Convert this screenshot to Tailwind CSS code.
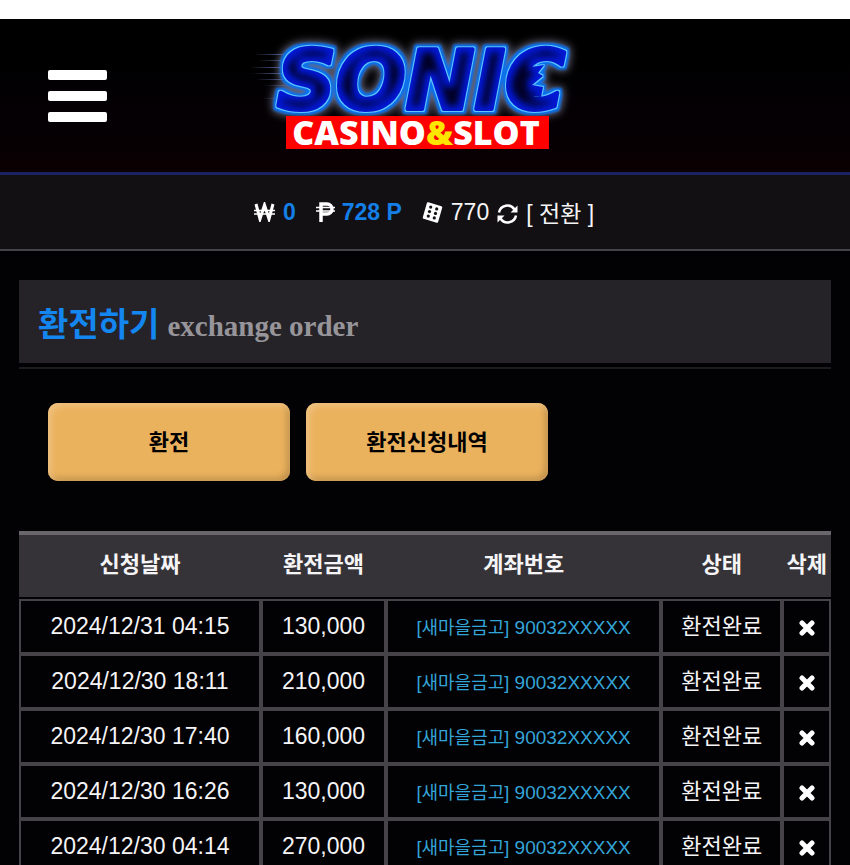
<!DOCTYPE html>
<html lang="ko">
<head>
    <meta charset="UTF-8">
    <meta name="viewport" content="width=device-width, initial-scale=1.0">
    <title>환전하기</title>
    <script src="https://cdn.jsdelivr.net/npm/@tailwindcss/browser@4"></script>
</head>
<body class="bg-[#020104] min-h-screen font-['Liberation_Sans','Noto_Sans_CJK_KR',sans-serif] text-[#f5f4f6] overflow-x-hidden">
    <!-- White strip above the header -->
    <div class="h-[19px] bg-white"></div>

    <header class="grid grid-cols-[1fr_auto_1fr] items-center h-[156px] pl-12 pr-[68px] bg-linear-to-b from-black via-[#030004] to-[#0a0002] border-b-3 border-[#1a2264]">
        <button type="button" aria-label="메뉴" class="flex flex-col gap-[11px] w-[59px]">
            <span class="h-2.5 rounded-[2px] bg-white"></span>
            <span class="h-2.5 rounded-[2px] bg-white"></span>
            <span class="h-2.5 rounded-[2px] bg-white"></span>
        </button>
        <a href="#" aria-label="SONIC CASINO&amp;SLOT">
            <svg class="w-[350px] h-[130px]" viewBox="0 0 350 130">
                <defs>
                    <!-- Grey halo, blue rim, cyan edge and dark core for the neon letters -->
                    <filter id="neon" x="-10%" y="-30%" width="120%" height="160%" color-interpolation-filters="sRGB">
                        <feMorphology in="SourceAlpha" operator="dilate" radius="4" result="wide"/>
                        <feGaussianBlur in="wide" stdDeviation="4" result="wideBlur"/>
                        <feFlood flood-color="#6c6c84"/>
                        <feComposite in2="wideBlur" operator="in" result="halo"/>
                        <feMorphology in="SourceAlpha" operator="dilate" radius="3" result="near"/>
                        <feGaussianBlur in="near" stdDeviation="1" result="nearBlur"/>
                        <feFlood flood-color="#0870f0"/>
                        <feComposite in2="nearBlur" operator="in" result="rim"/>
                        <feMorphology in="SourceAlpha" operator="dilate" radius="1" result="thin"/>
                        <feFlood flood-color="#5cc8ff"/>
                        <feComposite in2="thin" operator="in" result="edge"/>
                        <feMorphology in="SourceAlpha" operator="erode" radius="5" result="inner"/>
                        <feGaussianBlur in="inner" stdDeviation="3" result="innerBlur"/>
                        <feFlood flood-color="#010128"/>
                        <feComposite in2="innerBlur" operator="in" result="core"/>
                        <feMerge>
                            <feMergeNode in="halo"/>
                            <feMergeNode in="rim"/>
                            <feMergeNode in="edge"/>
                            <feMergeNode in="SourceGraphic"/>
                            <feMergeNode in="core"/>
                        </feMerge>
                    </filter>
                    <linearGradient id="streak">
                        <stop offset="0" stop-color="#7a8cc8" stop-opacity="0"/>
                        <stop offset="1" stop-color="#5d78d8"/>
                    </linearGradient>
                </defs>
                <g fill="url(#streak)">
                    <rect x="14" y="23" width="40" height="1"/>
                    <rect x="18" y="29" width="40" height="1"/>
                    <rect x="10" y="36" width="40" height="1"/>
                    <rect x="12" y="42" width="40" height="1"/>
                    <rect x="16" y="48" width="40" height="1"/>
                    <rect x="24" y="54" width="40" height="1"/>
                    <rect x="22" y="67" width="40" height="1"/>
                </g>
                <g filter="url(#neon)" fill="#0318d4" stroke="#0318d4">
                    <text x="37" y="78" font-family="'DejaVu Sans', sans-serif" font-weight="700" font-style="italic" font-size="82" stroke-width="4" stroke-linejoin="round">SONIC</text>
                    <path d="M285 37l19-3-6 8 5 3-11 9 11 2-2 10-16-2z" stroke="none"/>
                </g>
                <rect x="46" y="85" width="263" height="33" fill="#fe0000"/>
                <text x="176" y="114" text-anchor="middle" font-family="'Open Sans', sans-serif" font-weight="800" font-size="34" fill="#fff">CASINO<tspan fill="#ffe600">&amp;</tspan>SLOT</text>
            </svg>
        </a>
    </header>

    <!-- Balance bar -->
    <div class="flex items-center justify-center h-[76px] pr-0.5 bg-[#121013] border-b-2 border-[#444347] text-[23px]">
        <svg class="w-[21px] h-5 mr-2" viewBox="0 0 21 20" fill="none" stroke="#fff">
            <path d="M2 2l4 15L10.500 3 15 17l4-15" stroke-width="3"/>
            <path d="M0 8.500h21M0 12h21" stroke-width="1.500"/>
        </svg>
        <strong class="text-[#147fe6]">0</strong>
        <svg class="w-5 h-5 ml-5 mr-1.5" viewBox="0 0 20 20" fill="none" stroke="#fff">
            <path d="M5 20V2h6a4.500 4.500 0 0 1 0 10H5" stroke-width="3.500"/>
            <path d="M0 5.500h19M0 9h19" stroke-width="1.500"/>
        </svg>
        <strong class="text-[#147fe6]">728 P</strong>
        <svg class="w-[21px] h-[21px] ml-5 mr-2" viewBox="0 0 21 21">
            <path d="M6 1.500l13 4-4 14-13-4z" fill="#fff" stroke="#fff" stroke-width="2.500" stroke-linejoin="round"/>
            <g fill="#121013">
                <circle cx="8.700" cy="5.100" r="1.600"/>
                <circle cx="7.500" cy="9.600" r="1.600"/>
                <circle cx="6.300" cy="14.100" r="1.600"/>
                <circle cx="14.700" cy="6.900" r="1.600"/>
                <circle cx="13.500" cy="11.400" r="1.600"/>
                <circle cx="12.300" cy="15.900" r="1.600"/>
            </g>
        </svg>
        <span>770</span>
        <button type="button" class="flex items-center ml-2 pt-1">
            <svg class="w-[21px] h-5 mr-2" viewBox="0 0 21 20">
                <path d="M2 8.500a8.500 8.500 0 0 1 15.500-3M19 11.500a8.500 8.500 0 0 1-15.500 3" fill="none" stroke="#fff" stroke-width="2.500"/>
                <path d="M20.500 1.500v7h-7zM.5 18.500v-7h7z" fill="#fff"/>
            </svg>
            <span>[ 전환 ]</span>
        </button>
    </div>

    <main class="px-[19px] pt-[29px]">
        <div class="pb-1 border-b-2 border-[#1d1c1f]">
            <h1 class="flex items-baseline h-[83px] pl-[19px] pt-5 bg-[#252328] font-bold text-[33px] text-[#1486f0]">
                환전하기
                <small class="ml-2 font-['Liberation_Serif',serif] text-[29px] text-[#97959a]">exchange order</small>
            </h1>
        </div>

        <div class="flex gap-4 mt-[34px] ml-[29px]">
            <button type="button" class="w-[242px] h-[78px] rounded-[10px] bg-[#ebb25e] text-black text-[22px] font-bold shadow-[inset_3px_3px_6px_#f0c384,inset_-3px_-3px_6px_#bd8f4a]">환전</button>
            <button type="button" class="w-[242px] h-[78px] rounded-[10px] bg-[#ebb25e] text-black text-[22px] font-bold shadow-[inset_3px_3px_6px_#f0c384,inset_-3px_-3px_6px_#bd8f4a]">환전신청내역</button>
        </div>

        <table class="w-full mt-[50px] table-fixed border-separate border-spacing-0 text-center">
            <thead class="bg-[#353337] text-[22px]">
                <tr class="h-[66px]">
                    <th class="w-[29.800%] pb-1 border-t-4 border-[#69676b]">신청날짜</th>
                    <th class="w-[15.400%] pb-1 border-t-4 border-[#69676b]">환전금액</th>
                    <th class="w-[33.900%] pb-1 border-t-4 border-[#69676b]">계좌번호</th>
                    <th class="w-[14.900%] pb-1 border-t-4 border-[#69676b]">상태</th>
                    <th class="w-[6%] pb-1 border-t-4 border-[#69676b] whitespace-nowrap">삭제</th>
                </tr>
            </thead>
            <tbody id="orderList">
                <tr><td colspan="5" class="h-0.5"></td></tr>
            </tbody>
        </table>
    </main>

    <script>
        let orders = [
            ['2024/12/31 04:15', '130,000'],
            ['2024/12/30 18:11', '210,000'],
            ['2024/12/30 17:40', '160,000'],
            ['2024/12/30 16:26', '130,000'],
            ['2024/12/30 04:14', '270,000']
        ];
        let orderList = document.getElementById('orderList');

        orders.forEach(function(order) {
            let row = document.createElement('tr');
            row.className = 'h-[55px]';
            row.innerHTML = `
                <td class="border-2 border-[#454348] text-[23px]">${order[0]}</td>
                <td class="border-2 border-[#454348] text-[23px]">${order[1]}</td>
                <td class="pt-1 border-2 border-[#454348] text-[19px] text-[#34a5d8]"><span class="text-[18px]">[새마을금고]</span> 90032XXXXX</td>
                <td class="border-2 border-[#454348] text-[22px]">환전완료</td>
                <td class="pt-0.5 border-2 border-[#454348]">
                    <button type="button" aria-label="삭제" class="block mx-auto">
                        <svg class="w-4 h-4" viewBox="0 0 16 16" stroke="#fff" stroke-width="5" stroke-linecap="round"><path d="M3 3l10 10M13 3L3 13"/></svg>
                    </button>
                </td>`;
            orderList.appendChild(row);
        });
    </script>
</body>
</html>
